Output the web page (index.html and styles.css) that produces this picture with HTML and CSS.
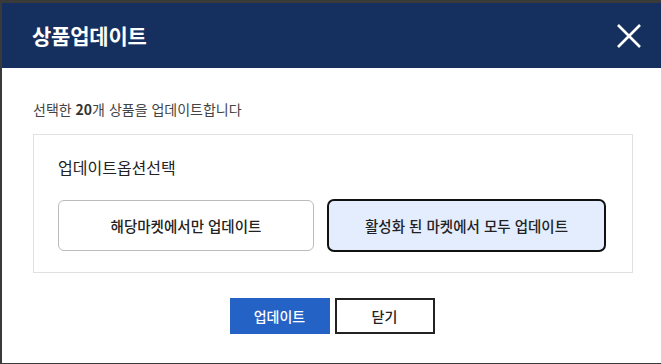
FILE: index.html
```html
<!DOCTYPE html>
<html lang="ko">
<head>
    <meta charset="UTF-8">
    <meta name="viewport" content="width=device-width, initial-scale=1.0">
    <title>상품업데이트</title>
    <link rel="stylesheet" href="styles.css">
</head>
<body>
    <div class="modal">
        <div class="modalHeader">
            <h2>상품업데이트</h2>
            <button type="button" class="btnClose" aria-label="닫기">
                <svg width="24" height="24" viewBox="0 0 24 24">
                    <path d="M1 1 L23 23 M23 1 L1 23" stroke="#fff" stroke-width="2.6" fill="none"/>
                </svg>
            </button>
        </div>
        <div class="modalBody">
            <p class="desc">선택한 <b>20</b>개 상품을 업데이트합니다</p>
            <div class="optionBox">
                <h5>업데이트옵션선택</h5>
                <div class="optionRow">
                    <button type="button" class="optionBtn btnOne">해당마켓에서만 업데이트</button>
                    <button type="button" class="optionBtn btnAll selected">활성화 된 마켓에서 모두 업데이트</button>
                </div>
            </div>
            <div class="footer">
                <button type="button" class="btnUpdate">업데이트</button>
                <button type="button" class="btnCancel">닫기</button>
            </div>
        </div>
    </div>
</body>
</html>
```

FILE: styles.css
```css
*{
    margin: 0;
    padding: 0;
    box-sizing: border-box;
    font-family: "Noto Sans CJK KR", "Noto Sans", sans-serif;
}
html, body{
    width: 661px;
    height: 364px;
    overflow: hidden;
}
body{
    background-color: #3a3a3a;
    padding: 3px 0 1px 2px;
}
button{
    cursor: pointer;
    font-size: 14px;
    color: #222;
}
.modal{
    height: 360px;
    background-color: #fff;
}
.modalHeader{
    height: 65px;
    background-color: #15305e;
    display: flex;
    align-items: center;
    justify-content: space-between;
    padding: 0 20px 0 30px;
}
.modalHeader h2{
    color: #fff;
    font-size: 21px;
    font-weight: 700;
    letter-spacing: -0.2px;
    margin-top: -1px;
}
.btnClose{
    background: none;
    border: none;
    width: 24px;
    height: 24px;
    display: flex;
}
.modalBody{
    padding: 0 28px 0 31px;
}
.desc{
    margin-top: 31px;
    font-size: 14px;
    line-height: 20px;
    color: #444;
}
.desc b{
    font-weight: 700;
    color: #333;
}
.optionBox{
    margin-top: 15px;
    border: 1px solid #e0e0e0;
    padding: 21px 25px 20px 24px;
}
.optionBox h5{
    font-size: 16px;
    font-weight: 400;
    color: #222;
    line-height: 22px;
}
.optionRow{
    display: flex;
    gap: 13px;
    margin-top: 21px;
}
.optionBtn{
    height: 53px;
    background-color: #fff;
    border: 1px solid #bbb;
    border-radius: 6px;
    font-size: 14.5px;
    font-weight: 500;
}
.btnOne{
    width: 256px;
    height: 51px;
    margin-top: 1px;
}
.btnAll{
    width: 279px;
}
.optionBtn.selected{
    background-color: #e4edfe;
    border: 2px solid #111;
    border-radius: 7px;
}
.footer{
    display: flex;
    justify-content: center;
    gap: 5px;
    margin-top: 25px;
    padding-right: 2px;
}
.footer button{
    width: 100px;
    height: 36px;
}
.btnUpdate{
    background-color: #2462c6;
    border: none;
    color: #fff;
    font-weight: 500;
}
.btnCancel{
    background-color: #fff;
    border: 2px solid #222;
    font-weight: 500;
}
```
